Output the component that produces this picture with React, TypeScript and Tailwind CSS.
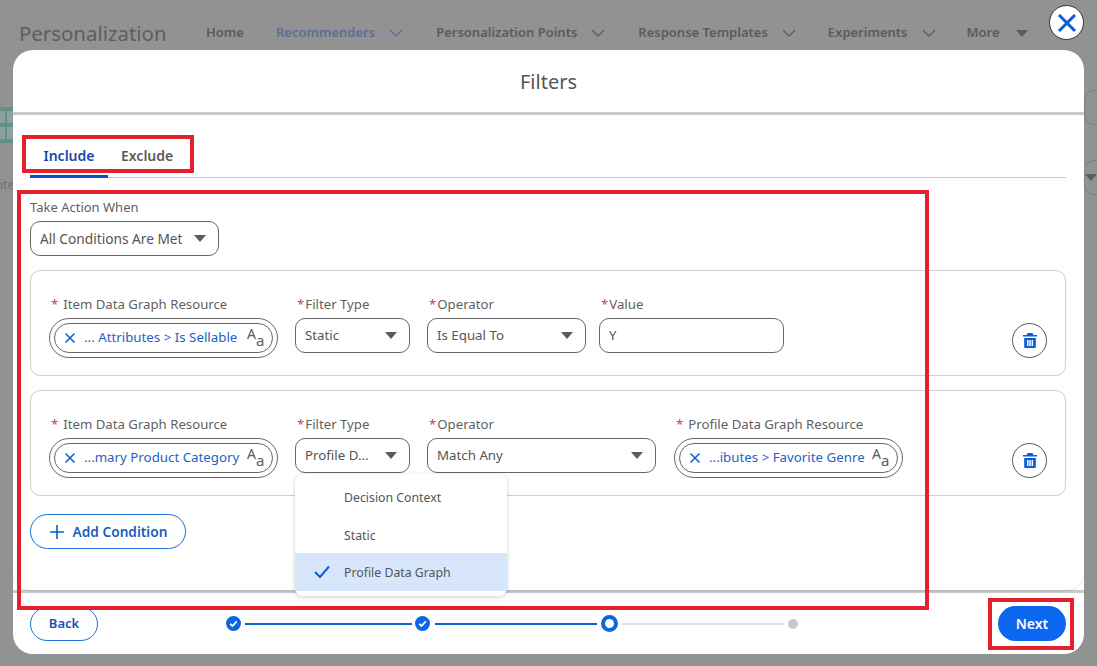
import React from "react";

const font = { fontFamily: '"Noto Sans", "Open Sans", Arial, sans-serif' };

function Chevron() {
  return (
    <svg width="14" height="8" viewBox="0 0 14 8" fill="none" className="ml-[14px] shrink-0">
      <path d="M1 1l6 6 6-6" stroke="currentColor" strokeWidth="1.3" />
    </svg>
  );
}

function Caret({ className = "" }: { className?: string }) {
  return (
    <svg width="12" height="7" viewBox="0 0 12 7" className={className}>
      <path d="M0 0h12L6 7z" fill="#5c5c5c" />
    </svg>
  );
}

function Label({ text, wide }: { text: string; wide?: boolean }) {
  return (
    <div className="h-[20px] flex items-center text-[13.2px] leading-[20px] text-[#5f5f5f] whitespace-nowrap">
      <span className={`text-[#b5486e] ${wide ? "ml-[2px] mr-[5px]" : "mr-[1px] ml-[2px]"}`}>*</span>
      {text}
    </div>
  );
}

function SelectBox({ value, width, size = "text-[13.3px]" }: { value: string; width: string; size?: string }) {
  return (
    <div className={`${width} h-[35px] border border-[#666] rounded-[10px] bg-white flex items-center justify-between pl-[9px] pr-[12px] ${size} text-[#555]`}>
      <span className="whitespace-nowrap pt-[1px]">{value}</span>
      <Caret />
    </div>
  );
}

function Pill({ text }: { text: string }) {
  return (
    <div className="w-[229px] h-[40px] border border-[#666] rounded-full p-[4px] bg-white">
      <div className="h-full border border-[#666] rounded-full flex items-center pl-[9px] pr-[7px] text-[13.3px] text-[#1f62c4]">
        <svg width="12" height="12" viewBox="0 0 12 12" className="shrink-0 mr-[8px]">
          <path d="M1.5 1.5l9 9M10.5 1.5l-9 9" stroke="#0b5cd5" strokeWidth="1.5" />
        </svg>
        <span className="flex-1 whitespace-nowrap overflow-hidden">{text}</span>
        <span className="relative w-[18px] h-[20px] shrink-0 text-[#5a5a5a]">
          <span className="absolute left-0 -top-[3px] text-[14px] leading-[18px]">A</span>
          <span className="absolute left-[9px] top-[3px] text-[15px] leading-[18px]">a</span>
        </span>
      </div>
    </div>
  );
}

function Trash() {
  return (
    <div className="ml-auto mt-[29px] w-[35px] h-[35px] rounded-full border border-[#555] bg-white flex items-center justify-center shrink-0">
      <svg width="14" height="15" viewBox="0 0 14 15">
        <path d="M5 0h4a1 1 0 0 1 1 1v1h4v1.6H0V2h4V1a1 1 0 0 1 1-1z" fill="#0b5cd5" />
        <path fillRule="evenodd" d="M1.2 5h11.6v9a1 1 0 0 1-1 1H2.2a1 1 0 0 1-1-1V5zM4 7v6h1.5V7H4zm2.3 0v6h1.5V7H6.3zm2.3 0v6h1.5V7H8.6z" fill="#0b5cd5" />
      </svg>
    </div>
  );
}

function Field({ label, wide, gap, children }: { label: string; wide?: boolean; gap?: string; children: React.ReactNode }) {
  return (
    <div className={`flex flex-col gap-[4px] shrink-0 ${gap ?? ""}`}>
      <Label text={label} wide={wide} />
      {children}
    </div>
  );
}

function DoneStep() {
  return (
    <svg width="15" height="15" viewBox="0 0 15 15" className="shrink-0">
      <circle cx="7.5" cy="7.5" r="7.5" fill="#0b66e4" />
      <path d="M4.2 7.8l2.3 2.2 4.2-4.6" fill="none" stroke="#fff" strokeWidth="1.8" />
    </svg>
  );
}

export default function App() {
  return (
    <div style={font} className="relative w-[1097px] h-[666px] overflow-hidden bg-[#929292]">
      {/* page behind the overlay */}
      <div className="h-[50px] flex items-center pl-[19px] pt-[16px] text-[13px] font-semibold text-[#5b5b5b] whitespace-nowrap">
        <span className="text-[20.4px] font-normal text-[#5a5f63] w-[187px]">Personalization</span>
        <span className="w-[70px]">Home</span>
        <span className="text-[#5b6f96]">Recommenders</span>
        <span className="text-[#5b6f96] mr-[33px]"><Chevron /></span>
        <span>Personalization Points</span>
        <span className="mr-[33px]"><Chevron /></span>
        <span>Response Templates</span>
        <span className="mr-[32px]"><Chevron /></span>
        <span>Experiments</span>
        <span className="mr-[31px]"><Chevron /></span>
        <span>More</span>
        <Caret className="ml-[16px]" />
      </div>

      {/* background fragments peeking out beside the modal */}
      <svg width="13" height="36" viewBox="0 0 13 36" className="absolute left-0 top-[107px]">
        <path d="M0 0h13v36H0z" fill="#5f9389" />
        <path d="M0 4h5v12H0zM7 4h6v12H7zM0 20h5v12H0zM7 20h6v12H7z" fill="#8f9f9b" />
      </svg>
      <div className="absolute left-0 top-[176px] w-[13px] text-[12px] text-[#6f6f6f] overflow-hidden">ite</div>
      <div className="absolute right-0 top-[90px] w-[13px] h-[35px] border border-[#808080] border-r-0 rounded-l-[10px]" />
      <div className="absolute right-0 top-[160px] w-[13px] h-[35px] border border-[#808080] border-r-0 rounded-l-[10px] flex items-center justify-end">
        <Caret />
      </div>

      {/* close */}
      <button className="absolute left-[1049px] top-[5px] w-[35px] h-[35px] rounded-full bg-white border border-[#333] flex items-center justify-center">
        <svg width="20" height="20" viewBox="0 0 20 20">
          <path d="M2 2l16 16M18 2L2 18" stroke="#0b5cd5" strokeWidth="3" />
        </svg>
      </button>

      {/* modal */}
      <div className="ml-[13px] w-[1071px] h-[604px] rounded-[20px] bg-white flex flex-col overflow-hidden">
        <div className="h-[65px] shrink-0 border-b-[3px] border-[#c9c9c9] flex items-center justify-center pt-[2px] text-[20px] text-[#555]">
          Filters
        </div>

        <div className="h-[478px] shrink-0 border-b-[3px] border-[#c9c9c9]">
          <div className="h-full rounded-b-[18px] shadow-[0_1px_2px_rgba(0,0,0,0.12)] px-[17px] pt-[26px]">
            {/* tabs */}
            <div className="w-[1036px] h-[37px] border-b border-[#c9c9c9] flex text-[14px] font-semibold">
              <div className="w-[78px] h-[37px] border-b-[3px] border-[#0b4fc0] text-[#1c45a8] flex items-start justify-center pt-[4px]">
                Include
              </div>
              <div className="ml-[13px] pt-[4px] text-[#5a5a5a]">Exclude</div>
            </div>

            <div className="mt-[19px] text-[13px] leading-[20px] text-[#5f5f5f]">Take Action When</div>
            <div className="mt-[4px]">
              <SelectBox value="All Conditions Are Met" width="w-[189px]" size="text-[13.7px]" />
            </div>

            {/* condition 1 */}
            <div className="mt-[14px] w-[1036px] h-[106px] border border-[#cfcfcf] rounded-[10px] pl-[18px] pr-[18px] pt-[23px] flex">
              <Field label="Item Data Graph Resource" wide><Pill text="... Attributes > Is Sellable" /></Field>
              <Field label="Filter Type" gap="ml-[17px]"><SelectBox value="Static" width="w-[115px]" /></Field>
              <Field label="Operator" gap="ml-[17px]"><SelectBox value="Is Equal To" width="w-[159px]" /></Field>
              <Field label="Value" gap="ml-[13px]">
                <div className="w-[185px] h-[35px] border border-[#666] rounded-[10px] flex items-center pl-[9px] pt-[1px] text-[13px] text-[#555]">Y</div>
              </Field>
              <Trash />
            </div>

            {/* condition 2 */}
            <div className="mt-[14px] w-[1036px] h-[106px] border border-[#cfcfcf] rounded-[10px] pl-[18px] pr-[18px] pt-[23px] flex">
              <Field label="Item Data Graph Resource" wide><Pill text="...mary Product Category" /></Field>
              <Field label="Filter Type" gap="ml-[17px]"><SelectBox value="Profile D..." width="w-[115px]" /></Field>
              <Field label="Operator" gap="ml-[17px]"><SelectBox value="Match Any" width="w-[229px]" /></Field>
              <Field label="Profile Data Graph Resource" wide gap="ml-[18px]"><Pill text="...ibutes > Favorite Genre" /></Field>
              <Trash />
            </div>

            {/* add */}
            <button className="mt-[18px] w-[156px] h-[35px] border border-[#1b6fd6] rounded-full flex items-center justify-center gap-[9px] pl-[1px] text-[13.7px] font-semibold text-[#1c5cc0]">
              <svg width="14" height="14" viewBox="0 0 14 14">
                <path d="M7 0v14M0 7h14" stroke="#0b5cd5" strokeWidth="1.6" />
              </svg>
              <span className="pt-[1px]">Add Condition</span>
            </button>
          </div>
        </div>

        {/* footer */}
        <div className="flex-1 flex items-center pl-[17px] pr-[18px]">
          <button className="w-[68px] h-[34px] border border-[#1b6fd6] rounded-full text-[13px] font-semibold text-[#1c4fb0]">Back</button>
          <div className="ml-[128px] flex items-center">
            <DoneStep />
            <div className="ml-[4px] w-[167px] h-[2px] bg-[#0b66d4]" />
            <div className="ml-[3px]"><DoneStep /></div>
            <div className="ml-[5px] w-[162px] h-[2px] bg-[#0b66d4]" />
            <div className="ml-[4px] w-[17px] h-[17px] rounded-full border-[4px] border-[#0b66e4] bg-white" />
            <div className="ml-[4px] w-[162px] h-[2px] bg-[#e0e0e0]" />
            <div className="ml-[4px] w-[10px] h-[10px] rounded-full bg-[#c8c8c8]" />
          </div>
          <button className="ml-auto w-[68px] h-[35px] rounded-full bg-[#0b66f0] text-[14px] font-semibold text-white">Next</button>
        </div>
      </div>

      {/* open dropdown */}
      <div className="absolute left-[295px] top-[474px] w-[212px] h-[122px] bg-white rounded-[8px] shadow-[0_1px_4px_rgba(0,0,0,0.2)] text-[12.3px] text-[#555] pt-[3px] overflow-hidden">
        <div className="h-[38px] flex items-center pl-[49px] pt-[4px]">Decision Context</div>
        <div className="h-[38px] flex items-center pl-[49px] pt-[4px]">Static</div>
        <div className="h-[38px] flex items-center bg-[#d8e6fc] pl-[19px]">
          <svg width="16" height="13" viewBox="0 0 16 13" className="mr-[14px] -mt-[1px]">
            <path d="M1 7l5 5L15 1.5" fill="none" stroke="#0b5cd5" strokeWidth="2" />
          </svg>
          <span className="pt-[2px]">Profile Data Graph</span>
        </div>
      </div>

      {/* red annotation boxes */}
      <div className="absolute left-[22px] top-[135px] w-[172px] h-[38px] border-[4px] border-[#e3202b] pointer-events-none" />
      <div className="absolute left-[17px] top-[190px] w-[912px] h-[420px] border-[4px] border-[#e3202b] pointer-events-none" />
      <div className="absolute left-[988px] top-[598px] w-[86px] h-[52px] border-[4px] border-[#e3202b] pointer-events-none" />
    </div>
  );
}
